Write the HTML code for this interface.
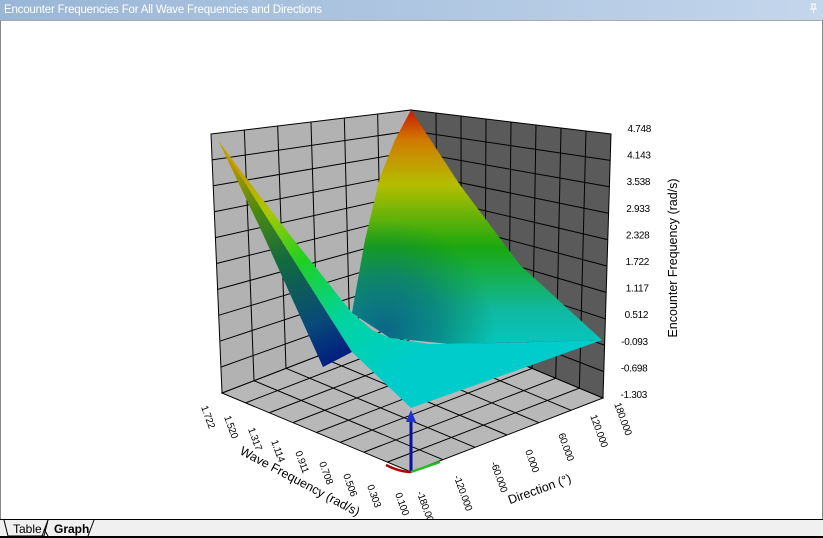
<!DOCTYPE html>
<html><head><meta charset="utf-8"><style>
body{margin:0;width:823px;height:538px;overflow:hidden;background:#fff;font-family:"Liberation Sans",sans-serif;position:relative}
#title{position:absolute;left:0;top:0;width:823px;height:20px;background:linear-gradient(90deg,#9ab6d6,#c3d6ec);color:#fff;font-size:11.5px;line-height:21px;text-indent:4px;letter-spacing:-0.2px}
#frame{position:absolute;left:0;top:20px;width:821px;height:499px;border-left:1px solid #888;border-right:1px solid #888;border-top:1px solid #aaa}
#tabs{position:absolute;left:0;top:519px;width:823px;height:19px;background:#f0f0f0;border-top:1px solid #000;border-bottom:2px solid #000;box-sizing:border-box}
svg{position:absolute;left:0;top:0}
</style></head><body>
<div id="title">Encounter Frequencies For All Wave Frequencies and Directions</div>
<div id="frame"></div>
<svg width="823" height="538" id="s" font-family="Liberation Sans, sans-serif">
<defs>
<linearGradient id="gBack" x1="0" y1="110" x2="0" y2="360" gradientUnits="userSpaceOnUse">
<stop offset="0" stop-color="#c81800"/><stop offset="0.12" stop-color="#d07a00"/><stop offset="0.3" stop-color="#b4be00"/><stop offset="0.55" stop-color="#1aa810"/><stop offset="0.8" stop-color="#10b8a0"/><stop offset="1" stop-color="#00cccc"/></linearGradient>
<radialGradient id="gBackDark" cx="385" cy="330" r="110" gradientUnits="userSpaceOnUse">
<stop offset="0" stop-color="#0a5c80" stop-opacity="0.9"/><stop offset="0.5" stop-color="#0a6a70" stop-opacity="0.6"/><stop offset="1" stop-color="#0a7a40" stop-opacity="0"/></radialGradient>
<linearGradient id="gLeft" x1="230" y1="160" x2="330" y2="367" gradientUnits="userSpaceOnUse">
<stop offset="0" stop-color="#c09800"/><stop offset="0.25" stop-color="#4a8a10"/><stop offset="0.5" stop-color="#126a40"/><stop offset="0.8" stop-color="#084a78"/><stop offset="1" stop-color="#001a80"/></linearGradient>
<linearGradient id="gFront" x1="240" y1="170" x2="390" y2="380" gradientUnits="userSpaceOnUse">
<stop offset="0" stop-color="#c8a000"/><stop offset="0.2" stop-color="#a8c800"/><stop offset="0.42" stop-color="#20d020"/><stop offset="0.7" stop-color="#00d4a0"/><stop offset="1" stop-color="#00cccc"/></linearGradient>
</defs>
<g id="grid"></g>
<polygon points="411,110 395,140 380,177 365,240 353,307 352,313 390,338 450,344 602,340 520,265 460,185" fill="url(#gBack)"/>
<polygon points="411,110 395,140 380,177 365,240 353,307 352,313 390,338 450,344 602,340 520,265 460,185" fill="url(#gBackDark)"/>
<polygon points="218,140 262,232 323,367 352,352 300,270" fill="url(#gLeft)"/>
<polygon points="218,140 240,170 290,235 352,313 372,330 390,338 430,344 500,343 602,340 411,408 352,352 300,270" fill="url(#gFront)"/>
<g id="labels"></g>
<line x1="411" y1="472" x2="411" y2="420" stroke="#0a10a0" stroke-width="3"/>
<polygon points="406,422 416,422 411,410" fill="#2030d0"/>
<path d="M386,465 Q400,472 411,472" stroke="#b00000" stroke-width="2.5" fill="none"/>
<path d="M411,472 L440,462" stroke="#20c020" stroke-width="2.5" fill="none"/>
<g font-size="10" fill="#000" text-anchor="end" id="zl" letter-spacing="-0.3"></g>
<text transform="translate(677,258) rotate(-90)" font-size="12.5" text-anchor="middle">Encounter Frequency (rad/s)</text>
<text transform="translate(298,485) rotate(28)" font-size="12.5" text-anchor="middle">Wave Frequency (rad/s)</text>
<text transform="translate(541,493) rotate(-20)" font-size="12.5" text-anchor="middle">Direction (°)</text>
<path d="M811,4 L816,4 M812,4 L812,9 M815,4 L815,9 M810,9 L817,9 M813.5,9 L813.5,13" stroke="#fff" stroke-width="1" fill="none"/>
</svg>
<div id="tabs"></div>
<svg width="823" height="538" style="pointer-events:none">
<path d="M4,520 L8,536 L44,536 L48,520" fill="#f0f0f0" stroke="#000"/>
<path d="M42,536 L48,520 M48,536 L44,529 M88,536 L94,520" fill="none" stroke="#000"/>
<text x="13" y="533" font-size="12" fill="#000" font-family="Liberation Sans, sans-serif">Table</text>
<text x="54" y="533" font-size="12" font-weight="bold" fill="#000" font-family="Liberation Sans, sans-serif">Graph</text>
</svg>
<script>
var NS="http://www.w3.org/2000/svg",g=document.getElementById('grid');
function el(t,a,p){var e=document.createElementNS(NS,t);for(var k in a)e.setAttribute(k,a[k]);(p||g).appendChild(e);return e}
function L(a,b,t){return[a[0]+(b[0]-a[0])*t,a[1]+(b[1]-a[1])*t]}
var TL=[211,134],TB=[411,110],BB=[414,319],BL=[222,393],TR=[611,134],BR=[603,398],F=[411,472];
function poly(p,f){el('polygon',{points:p.map(function(q){return q.join(',')}).join(' '),fill:f,stroke:'#000','stroke-width':1})}
poly([BL,BB,BR,F],'#b8b8b8');
poly([TL,TB,BB,BL],'#b2b2b2');
poly([TB,TR,BR,BB],'#5a5a5a');
function line(a,b){el('line',{x1:a[0],y1:a[1],x2:b[0],y2:b[1],stroke:'#000','stroke-width':1})}
var i;
for(i=1;i<6;i++){line(L(TL,TB,i/6),L(BL,BB,i/6))}
for(i=1;i<10;i++){line(L(TL,BL,i/10),L(TB,BB,i/10));line(L(TB,BB,i/10),L(TR,BR,i/10))}
for(i=1;i<8;i++){line(L(TB,TR,i/8),L(BB,BR,i/8))}
for(i=1;i<6;i++){line(L(BB,BL,i/6),L(BR,F,i/6))}
for(i=1;i<8;i++){line(L(BB,BR,i/8),L(BL,F,i/8))}
var lb=document.getElementById('labels');
var fq=[["1.722",205,418],["1.520",228,428],["1.317",252,440],["1.114",275,452],["0.911",299,463],["0.708",323,474],["0.506",347,486],["0.303",371,497],["0.100",399,505]];
var dr=[["-180.000",423,510],["-120.000",460,494],["-60.000",496,478],["0.000",529,462],["60.000",563,448],["120.000",596,432],["180.000",620,420]];
fq.forEach(function(d){el('rect',{x:d[1]-6,y:d[2]-22,width:26,height:60,fill:'#fff'},lb)});
dr.forEach(function(d){el('rect',{x:d[1]-8,y:d[2]-22,width:30,height:60,fill:'#fff'},lb)});
fq.concat(dr).forEach(function(d){var t=el('text',{transform:'translate('+d[1]+','+d[2]+') rotate(70)','font-size':10,'text-anchor':'middle',fill:'#000','letter-spacing':'-0.3'},lb);t.textContent=d[0]});
var z=["4.748","4.143","3.538","2.933","2.328","1.722","1.117","0.512","-0.093","-0.698","-1.303"],zl=document.getElementById('zl');
z.forEach(function(v,k){var t=el('text',{x:651-k*0.4,y:132+k*26.6},zl);t.textContent=v});
</script>
</body></html>
